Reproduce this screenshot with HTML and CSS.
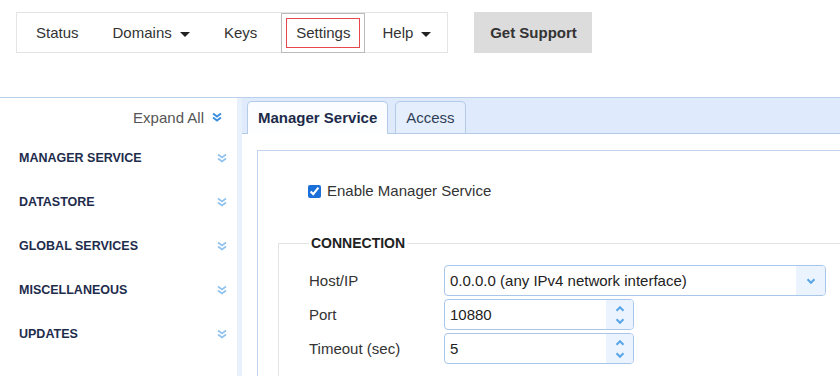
FILE: index.html
```html
<!doctype html>
<html lang="en">
<head>
    <meta charset="UTF-8">
    <title>Settings - Manager Service</title>
    <link rel="stylesheet" href="styles.css">
</head>
<body>
    <div class="topbar">
        <ul class="nav">
            <li><a>Status</a></li>
            <li><a>Domains <span class="caret"></span></a></li>
            <li><a>Keys</a></li>
            <li class="active"><a><span>Settings</span></a></li>
            <li><a>Help <span class="caret"></span></a></li>
        </ul>
        <button class="support">Get Support</button>
    </div>

    <div class="app">
        <div class="sidebar">
            <div class="expand">Expand All
                <svg class="chev dark" viewBox="0 0 12 12"><path d="M2 2.5l4 3 4-3M2 6.5l4 3 4-3"/></svg>
            </div>
            <div class="section">MANAGER SERVICE <svg class="chev" viewBox="0 0 12 12"><path d="M2 2.5l4 3 4-3M2 6.5l4 3 4-3"/></svg></div>
            <div class="section">DATASTORE <svg class="chev" viewBox="0 0 12 12"><path d="M2 2.5l4 3 4-3M2 6.5l4 3 4-3"/></svg></div>
            <div class="section">GLOBAL SERVICES <svg class="chev" viewBox="0 0 12 12"><path d="M2 2.5l4 3 4-3M2 6.5l4 3 4-3"/></svg></div>
            <div class="section">MISCELLANEOUS <svg class="chev" viewBox="0 0 12 12"><path d="M2 2.5l4 3 4-3M2 6.5l4 3 4-3"/></svg></div>
            <div class="section">UPDATES <svg class="chev" viewBox="0 0 12 12"><path d="M2 2.5l4 3 4-3M2 6.5l4 3 4-3"/></svg></div>
        </div>

        <div class="main">
            <div class="tabs">
                <div class="tab current">Manager Service</div>
                <div class="tab">Access</div>
            </div>
            <div class="content">
                <div class="panel">
                    <label class="enable"><input type="checkbox" checked> Enable Manager Service</label>

                    <fieldset>
                        <legend>CONNECTION</legend>
                        <div class="form">
                            <div class="label">Host/IP</div>
                            <div class="field wide">
                                <span class="value">0.0.0.0 (any IPv4 network interface)</span>
                                <span class="btn"><svg viewBox="0 0 12 12"><path d="M3 4.5l3 3 3-3"/></svg></span>
                            </div>
                            <div class="label">Port</div>
                            <div class="field">
                                <span class="value">10880</span>
                                <span class="btn spin">
                                    <svg viewBox="0 0 12 8"><path d="M3 5.5l3-3 3 3"/></svg>
                                    <svg viewBox="0 0 12 8"><path d="M3 2.5l3 3 3-3"/></svg>
                                </span>
                            </div>
                            <div class="label">Timeout (sec)</div>
                            <div class="field">
                                <span class="value">5</span>
                                <span class="btn spin">
                                    <svg viewBox="0 0 12 8"><path d="M3 5.5l3-3 3 3"/></svg>
                                    <svg viewBox="0 0 12 8"><path d="M3 2.5l3 3 3-3"/></svg>
                                </span>
                            </div>
                        </div>
                    </fieldset>
                </div>
            </div>
        </div>
    </div>
</body>
</html>
```

FILE: styles.css
```css
body {
    margin: 0;
    font-family: "Liberation Sans", Arial, sans-serif;
    font-size: 15px;
    color: #333;
    background: #fff;
    overflow: hidden;
}
.topbar {
    display: flex;
    align-items: flex-start;
    padding: 12px 16px 0;
    height: 97px;
    box-sizing: border-box;
}
.nav {
    display: flex;
    list-style: none;
    margin: 0;
    padding: 0 0 0 2px;
    border: 1px solid #e4e4e4;
    height: 39px;
}
.nav li {
    display: flex;
    align-items: center;
}
.nav a {
    padding: 0 17px;
    color: #333;
    white-space: nowrap;
}
.nav li:last-child a {
    padding-right: 16px;
}
.caret {
    display: inline-block;
    width: 0;
    height: 0;
    margin-left: 4px;
    vertical-align: middle;
    border-left: 5px solid transparent;
    border-right: 5px solid transparent;
    border-top: 5px solid #222;
}
.nav li.active {
    border: 1px solid #bbb;
    margin: 0 0 0 7px;
    height: 40px;
    padding: 0 4px;
    box-sizing: border-box;
}
.nav li.active a {
    padding: 0;
}
.nav li.active span {
    display: block;
    border: 1px solid #e8474e;
    padding: 0 9px;
    line-height: 28px;
}
.support {
    margin-left: 26px;
    width: 118px;
    height: 41px;
    border: none;
    background: #dcdcdc;
    font-family: inherit;
    font-size: 15px;
    font-weight: bold;
    color: #333;
}
.app {
    display: flex;
    border-top: 1px solid #b9cfea;
    height: 279px;
    overflow: hidden;
}
.sidebar {
    width: 237px;
    border-right: 5px solid #e8f0fb;
    flex-shrink: 0;
}
.expand {
    display: flex;
    justify-content: flex-end;
    align-items: center;
    gap: 7px;
    height: 38px;
    padding: 0 14px 0 0;
    box-sizing: border-box;
    color: #555;
}
.chev {
    width: 12px;
    height: 12px;
    fill: none;
    stroke: #8fc2ef;
    stroke-width: 1.6;
}
.chev.dark {
    stroke: #3a8ee0;
    stroke-width: 1.9;
}
.section {
    display: flex;
    justify-content: space-between;
    align-items: center;
    height: 44px;
    padding: 0 9px 0 19px;
    font-size: 12.5px;
    font-weight: bold;
    color: #1e2c4c;
}
.main {
    flex: 1;
}
.tabs {
    display: flex;
    gap: 7px;
    height: 36px;
    padding: 3px 0 0 5px;
    box-sizing: border-box;
    background: #dfebfd;
    border-bottom: 1px solid #b4cbe8;
}
.tab {
    padding: 0 10px;
    line-height: 31px;
    border: 1px solid #b4cbe8;
    border-bottom: none;
    border-radius: 5px 5px 0 0;
    background: #e5eefc;
    color: #2f3e58;
}
.tab.current {
    background: linear-gradient(#fafcff, #fdfeff);
    font-weight: bold;
    color: #1d2b4b;
    height: 32px;
    margin-bottom: -1px;
}
.content {
    padding: 16px 0 0 15px;
}
.panel {
    border-top: 1px solid #c3d6ef;
    border-left: 1px solid #c3d6ef;
    padding: 31px 0 0 20px;
    height: 240px;
}
.enable {
    display: flex;
    align-items: center;
    gap: 6px;
    margin-left: 30px;
    line-height: 18px;
}
.enable input {
    margin: 0;
    width: 13px;
    height: 13px;
    accent-color: #1a6fd8;
}
fieldset {
    margin: 35px 0 0;
    padding: 14px 0 60px 30px;
    border: 1px solid #e4e4e4;
    border-right: none;
}
legend {
    padding: 0 2px;
    font-size: 14px;
    font-weight: bold;
    color: #222;
}
.form {
    display: grid;
    grid-template-columns: 135px auto;
    row-gap: 3px;
    align-items: center;
}
.field {
    display: flex;
    justify-content: space-between;
    width: 190px;
    height: 31px;
    box-sizing: border-box;
    border: 1px solid #a8c5ea;
    border-radius: 4px;
    overflow: hidden;
}
.field.wide {
    width: 382px;
}
.value {
    padding: 0 5px;
    line-height: 29px;
    color: #222;
}
.btn {
    display: flex;
    align-items: center;
    justify-content: center;
    width: 29px;
    background: #eaf3fe;
}
.btn svg {
    width: 14px;
    height: 14px;
    fill: none;
    stroke: #5aa6e8;
    stroke-width: 1.8;
}
.btn.spin {
    flex-direction: column;
    gap: 2px;
    width: 27px;
}
.btn.spin svg {
    height: 10px;
}
```
